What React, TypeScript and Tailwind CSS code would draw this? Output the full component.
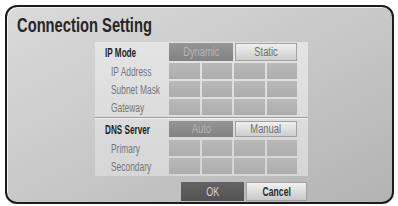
import React from "react";

const Cells = () => (
  <div className="grid w-[128px] grid-cols-4 gap-[2px]">
    {Array.from({ length: 4 }).map((_, i) => (
      <div key={i} className="h-[16px] bg-gradient-to-b from-[#b9b9b9] to-[#adadad]" />
    ))}
  </div>
);

const SubRow = ({ label }: { label: string }) => (
  <div className="flex h-[16px] items-center">
    <div className="w-[74px] pl-[16px]">
      <span className="inline-block origin-left scale-x-[0.7] whitespace-nowrap text-[12px] leading-none text-[#767676]">
        {label}
      </span>
    </div>
    <Cells />
  </div>
);

const ModeRow = ({ label, a, b, h }: { label: string; a: string; b: string; h: string }) => (
  <div className={`flex items-center ${h}`}>
    <div className="w-[74px] pl-[10px]">
      <span className="inline-block origin-left scale-x-[0.68] whitespace-nowrap text-[12px] font-bold leading-none text-[#1e1e1e]">
        {label}
      </span>
    </div>
    <div className="flex h-full w-[128px] gap-[2px]">
      <div className="flex w-[64px] items-center justify-center bg-gradient-to-b from-[#959595] to-[#828282]">
        <span className="inline-block scale-x-[0.78] text-[12px] leading-none text-[#b4b4b4]">{a}</span>
      </div>
      <div className="flex flex-1 items-center justify-center border border-[#a2a2a2] bg-gradient-to-b from-[#f0f0f0] to-[#cdcdcd]">
        <span className="inline-block scale-x-[0.78] text-[12px] leading-none text-[#6e6e6e]">{b}</span>
      </div>
    </div>
  </div>
);

export default function App() {
  return (
    <div className="h-[206px] w-[398px] overflow-hidden bg-white pl-[5px] pt-[5px] font-['Liberation_Sans',Arial,sans-serif]">
      <div className="h-[199px] w-[389px] rounded-[12px] border-2 border-[#1c1c1c] bg-gradient-to-br from-[#dadada] via-[#c8c8c8] to-[#b3b3b3] shadow-[inset_1px_1px_0_#efefef]">
        <div className="ml-[10px] mt-[8px] h-[20px] leading-[20px]">
          <span className="inline-block origin-left scale-x-[0.755] whitespace-nowrap text-[19.5px] font-bold text-[#262626]">
            Connection Setting
          </span>
        </div>
        <div className="ml-[88px] mt-[7px] w-[213px] bg-gradient-to-b from-[#e4e4e4] to-[#d6d6d6] pb-[2px] pt-[1px]">
          <ModeRow label="IP Mode" a="Dynamic" b="Static" h="h-[18px]" />
          <div className="mt-[2px] flex flex-col gap-[2px]">
            <SubRow label="IP Address" />
            <SubRow label="Subnet Mask" />
            <SubRow label="Gateway" />
          </div>
          <div className="mt-[2px] h-[1px] bg-[#9c9c9c]" />
          <div className="h-[1px] bg-[#f4f4f4]" />
          <div className="mt-[2px]">
            <ModeRow label="DNS Server" a="Auto" b="Manual" h="h-[16px]" />
          </div>
          <div className="mt-[3px] flex flex-col gap-[2px]">
            <SubRow label="Primary" />
            <SubRow label="Secondary" />
          </div>
        </div>
        <div className="ml-[174px] mt-[6px] flex h-[19px] gap-[2px]">
          <div className="flex w-[63px] items-center justify-center bg-gradient-to-b from-[#636363] to-[#535353]">
            <span className="inline-block scale-x-[0.75] text-[12px] leading-none text-[#d4d4d4]">OK</span>
          </div>
          <div className="flex w-[61px] items-center justify-center border border-[#a0a0a0] bg-gradient-to-b from-[#f2f2f2] to-[#c8c8c8]">
            <span className="inline-block scale-x-[0.72] text-[12px] font-bold leading-none text-[#2a2a2a]">Cancel</span>
          </div>
        </div>
      </div>
    </div>
  );
}
